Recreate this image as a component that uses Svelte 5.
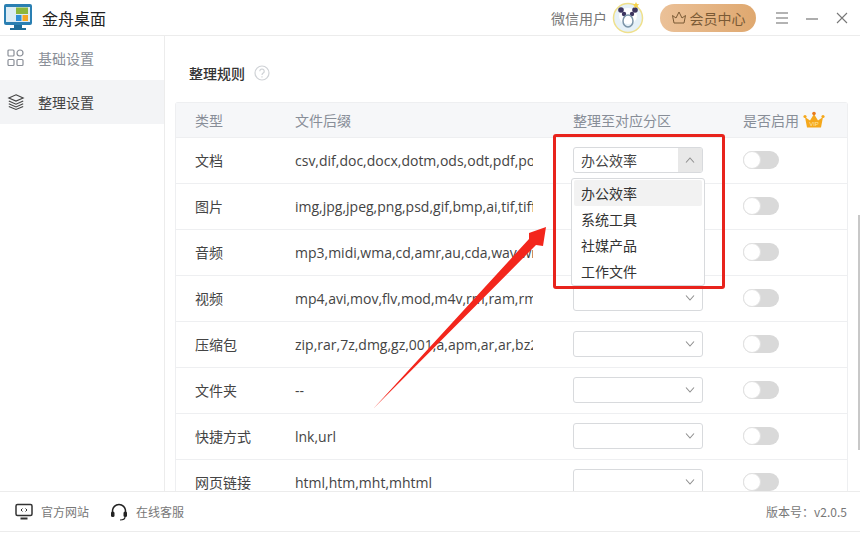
<script lang="ts">
	const rows = [
		{ type: '文档', ext: 'csv,dif,doc,docx,dotm,ods,odt,pdf,pot,potm,ppt', value: '办公效率', open: true },
		{ type: '图片', ext: 'img,jpg,jpeg,png,psd,gif,bmp,ai,tif,tiff,webp', value: '' },
		{ type: '音频', ext: 'mp3,midi,wma,cd,amr,au,cda,wav,wma,flac,ape', value: '' },
		{ type: '视频', ext: 'mp4,avi,mov,flv,mod,m4v,rm,ram,rmvb,mkv,wmv', value: '' },
		{ type: '压缩包', ext: 'zip,rar,7z,dmg,gz,001,a,apm,ar,ar,bz2,bzip2', value: '' },
		{ type: '文件夹', ext: '--', value: '' },
		{ type: '快捷方式', ext: 'lnk,url', value: '' },
		{ type: '网页链接', ext: 'html,htm,mht,mhtml', value: '' }
	];
	const options = ['办公效率', '系统工具', '社媒产品', '工作文件'];
</script>

<div class="app">
	<header class="topbar">
		<div class="brand">
			<svg width="29" height="28" viewBox="0 0 29 28">
				<rect x="0" y="0" width="28" height="21" rx="2" fill="#2a7fb2" />
				<rect x="2" y="3" width="24" height="15" fill="#dcecf5" />
				<rect x="12" y="3.500" width="12" height="6.500" fill="#8cb63c" />
				<rect x="12" y="11" width="5.500" height="6" fill="#2f8fd6" />
				<rect x="18.500" y="11" width="5.500" height="6" fill="#f5a623" />
				<rect x="10" y="21" width="8" height="3" fill="#1f6d99" />
				<rect x="6" y="24" width="16" height="2" fill="#1f6d99" />
			</svg>
			<span>金舟桌面</span>
		</div>
		<div class="top-right">
			<span class="user">微信用户</span>
			<svg class="avatar" width="32" height="32" viewBox="0 0 32 32">
				<circle cx="16" cy="16" r="14.500" fill="#e6f1f8" stroke="#efe08c" stroke-width="1.500" />
				<ellipse cx="16" cy="14" rx="9" ry="8" fill="#fff" />
				<circle cx="9" cy="8" r="2.800" fill="#3d3560" />
				<circle cx="23" cy="8" r="2.800" fill="#3d3560" />
				<circle cx="12" cy="12" r="2.200" fill="#3d3560" />
				<circle cx="20" cy="12" r="2.200" fill="#3d3560" />
				<ellipse cx="16" cy="19" rx="5" ry="6" fill="none" stroke="#7b94a8" stroke-width="1.500" />
				<path d="M24 0l1 2 2.200.3-1.600 1.500.4 2.200-2-1-2 1 .4-2.200L20.800 2.300 23 2z" fill="#f6d24a" />
			</svg>
			<button class="vip">
				<svg width="16" height="15" viewBox="0 0 16 15" fill="none" stroke="#7a5a35" stroke-width="1">
					<path d="M1.500 5.500l3.500 2.500L8 2l3 6 3.500-2.500L13 13H3z" />
				</svg>
				会员中心
			</button>
			<div class="win-btns">
				<svg width="14" height="14" viewBox="0 0 14 14" stroke="#9a9a9a" stroke-width="1.500"><path d="M1 2h12M1 7h12M1 12h12" /></svg>
				<svg width="14" height="14" viewBox="0 0 14 14" stroke="#777" stroke-width="1.200"><path d="M1 8h12" /></svg>
				<svg width="14" height="14" viewBox="0 0 14 14" stroke="#777" stroke-width="1.100"><path d="M2 2l10 10M12 2L2 12" /></svg>
			</div>
		</div>
	</header>

	<div class="body">
		<aside class="sidebar">
			<div class="nav-item">
				<svg width="18" height="18" viewBox="0 0 18 18" fill="none" stroke="#8a8f98" stroke-width="1.200">
					<rect x="1" y="1" width="6" height="6" rx="1" />
					<circle cx="13" cy="4" r="3" />
					<rect x="1" y="10.500" width="6" height="6" rx="1" />
					<rect x="10" y="10.500" width="6" height="6" rx="1" />
				</svg>
				<span>基础设置</span>
			</div>
			<div class="nav-item active">
				<svg width="18" height="18" viewBox="0 0 20 18" fill="none" stroke="#444" stroke-width="1.200">
					<path d="M10 1l8 3.500-8 3.500-8-3.500z" />
					<path d="M2 8l8 3.500L18 8" />
					<path d="M2 11l8 3.500 8-3.500" />
					<path d="M2 14l8 3.300 8-3.300" />
				</svg>
				<span>整理设置</span>
			</div>
		</aside>

		<main class="content">
			<div class="title">
				<span>整理规则</span>
				<svg width="16" height="16" viewBox="0 0 16 16" fill="none" stroke="#cfd2d6" stroke-width="1.200">
					<circle cx="8" cy="8" r="7" />
					<path d="M5.800 6.200a2.200 2.200 0 1 1 3.400 1.900C8.400 8.600 8 9 8 10M8 11.300v1.200" />
				</svg>
			</div>

			<div class="table">
				<div class="row head">
					<div class="c-type">类型</div>
					<div class="c-ext">文件后缀</div>
					<div class="c-sel">整理至对应分区</div>
					<div class="c-on">
						是否启用
						<svg width="22" height="18" viewBox="0 0 22 18">
							<path d="M2 6l5 3.500L11 3l4 6.500L20 6l-2 10.500H4z" fill="#f5a81c" />
							<circle cx="11" cy="2.500" r="1.800" fill="#e8791c" />
							<circle cx="2" cy="5.500" r="1.600" fill="#f5a81c" />
							<circle cx="20" cy="5.500" r="1.600" fill="#f5a81c" />
							<text x="11" y="15" text-anchor="middle" font-size="6" fill="#ffe6a8" font-family="Liberation Sans, sans-serif">VIP</text>
						</svg>
					</div>
				</div>
				{#each rows as row}
					<div class="row">
						<div class="c-type">{row.type}</div>
						<div class="c-ext"><span class="clip">{row.ext}</span></div>
						<div class="c-sel">
							<div class="select" class:open={row.open}>
								<span>{row.value}</span>
								<i class="arrow">
									<svg width="10" height="6" viewBox="0 0 10 6" fill="none" stroke="#8f8f8f" stroke-width="1.100">
										<path d={row.open ? 'M1 5.500l4-4.500 4 4.500' : 'M1 .5l4 4.500 4-4.500'} />
									</svg>
								</i>
							</div>
						</div>
						<div class="c-on"><span class="toggle"><b></b></span></div>
					</div>
				{/each}
			</div>
		</main>
		<div class="scroll-thumb"></div>

		<ul class="dropdown">
			{#each options as opt, i}
				<li class:hover={i === 0}>{opt}</li>
			{/each}
		</ul>
		<div class="red-box"></div>
		<svg class="red-arrow" width="180" height="190" viewBox="0 0 180 190">
			<path d="M0 189L156 19 156 13 173 7 170 26 163 25z" fill="#f3261c" />
		</svg>
	</div>

	<footer class="footer">
		<div class="links">
			<span class="link">
				<svg width="18" height="17" viewBox="0 0 18 17" fill="none" stroke="#333" stroke-width="1.500">
					<rect x="1" y="1.500" width="16" height="11" rx="1.500" />
					<path d="M5.500 15.500h7" stroke-width="2" />
					<path d="M7.500 5.500L6 7l1.500 1.500M10.500 5.500L12 7l-1.500 1.500" stroke-width="1" />
				</svg>
				官方网站
			</span>
			<span class="link">
				<svg width="18" height="18" viewBox="0 0 18 18" fill="none" stroke="#222">
					<path d="M2.500 10V8a6.500 6.500 0 0 1 13 0v2" stroke-width="1.500" />
					<rect x="1" y="8.500" width="3.500" height="5.500" rx="1.500" fill="#222" stroke="none" />
					<rect x="13.500" y="8.500" width="3.500" height="5.500" rx="1.500" fill="#222" stroke="none" />
					<path d="M15 14c0 2-2 3-5 3" stroke-width="1.200" />
				</svg>
				在线客服
			</span>
		</div>
		<span class="version">版本号：v2.0.5</span>
	</footer>
</div>

<style>
	:global(body) {
		background: #fff;
	}

	.app {
		width: 860px;
		height: 533px;
		display: flex;
		flex-direction: column;
		overflow: hidden;
		font-family: 'Noto Sans CJK SC', 'Open Sans', sans-serif;
		font-size: 14px;
		color: #555;
		background: #fff;
	}

	.topbar {
		height: 35px;
		flex: none;
		display: flex;
		align-items: center;
		justify-content: space-between;
		padding: 0 11px 0 4px;
		border-bottom: 1px solid #ececec;
	}

	.brand {
		display: flex;
		align-items: center;
		gap: 9px;
		font-size: 16px;
		color: #222;
	}

	.top-right {
		display: flex;
		align-items: center;
	}

	.user {
		color: #777;
		margin-right: 5px;
	}

	.avatar {
		margin-right: 16px;
		margin-top: 1px;
	}

	.vip {
		width: 96px;
		height: 28px;
		margin-right: 19px;
		padding: 0;
		border: 0;
		border-radius: 14px;
		background: linear-gradient(90deg, #ebc198, #dfa86f);
		color: #7a5a35;
		font: inherit;
		display: flex;
		align-items: center;
		justify-content: center;
		gap: 3px;
	}

	.win-btns {
		display: flex;
		gap: 16px;
	}

	.body {
		position: relative;
		flex: 1;
		min-height: 0;
		display: flex;
	}

	.sidebar {
		width: 164px;
		flex: none;
		border-right: 1px solid #ececec;
	}

	.nav-item {
		height: 44px;
		display: flex;
		align-items: center;
		gap: 13px;
		padding-left: 7px;
		color: #8a8f98;
	}

	.nav-item.active {
		background: #f3f4f6;
		color: #444;
	}

	.content {
		flex: 1;
		min-width: 0;
		padding: 0 14px 0 10px;
		overflow: hidden;
	}

	.title {
		height: 66px;
		box-sizing: border-box;
		padding: 8px 0 0 14px;
		display: flex;
		align-items: center;
		gap: 9px;
		color: #333;
		font-weight: 500;
	}

	.table {
		width: 671px;
		border: 1px solid #eeeff1;
		border-bottom: 0;
		border-radius: 3px 3px 0 0;
	}

	.row {
		height: 44px;
		padding-bottom: 1px;
		display: flex;
		align-items: center;
		border-bottom: 1px solid #eeeff1;
		color: #444;
	}

	.row.head {
		height: 33px;
		background: #f6f7f9;
		color: #888e98;
	}

	.c-type {
		width: 119px;
		padding-left: 19px;
		box-sizing: border-box;
		flex: none;
	}

	.c-ext {
		width: 278px;
		flex: none;
		font-family: 'Open Sans', 'Noto Sans CJK SC', sans-serif;
	}

	.head .c-ext {
		font-family: inherit;
	}

	.clip {
		display: block;
		width: 238px;
		overflow: hidden;
		white-space: nowrap;
	}

	.c-sel {
		width: 170px;
		flex: none;
	}

	.c-on {
		display: flex;
		align-items: center;
		gap: 4px;
	}

	.select {
		width: 130px;
		height: 26px;
		box-sizing: border-box;
		border: 1px solid #d8dadd;
		border-radius: 3px;
		display: flex;
		align-items: center;
		justify-content: space-between;
		padding-left: 7px;
		background: #fff;
		overflow: hidden;
	}

	.arrow {
		width: 24px;
		height: 100%;
		display: flex;
		align-items: center;
		justify-content: center;
	}

	.open .arrow {
		background: #e8e8e8;
	}

	.toggle {
		width: 36px;
		height: 18px;
		border-radius: 9px;
		background: #d9d9d9;
		display: block;
	}

	.toggle b {
		display: block;
		width: 18px;
		height: 18px;
		box-sizing: border-box;
		border-radius: 50%;
		background: #fff;
		border: 1px solid #e2e2e2;
	}

	.scroll-thumb {
		position: absolute;
		right: 0;
		top: 179px;
		width: 2px;
		height: 235px;
		background: #c8c8c8;
	}

	.dropdown {
		position: absolute;
		left: 571px;
		top: 142px;
		width: 134px;
		height: 108px;
		box-sizing: border-box;
		margin: 0;
		padding: 1px 2px;
		list-style: none;
		background: #fff;
		border: 1px solid #d8dadd;
		border-radius: 3px;
		color: #333;
	}

	.dropdown li {
		height: 26px;
		line-height: 26px;
		padding-left: 7px;
		border-radius: 2px;
	}

	.dropdown li.hover {
		background: #f2f2f2;
	}

	.red-box {
		position: absolute;
		left: 553px;
		top: 98px;
		width: 172px;
		height: 155px;
		box-sizing: border-box;
		border: 3px solid #e8231c;
		border-radius: 3px;
	}

	.red-arrow {
		position: absolute;
		left: 373px;
		top: 184px;
	}

	.footer {
		height: 41px;
		box-sizing: border-box;
		flex: none;
		margin-bottom: 1px;
		display: flex;
		align-items: center;
		justify-content: space-between;
		padding: 0 13px 0 15px;
		border-top: 1px solid #ececec;
		border-bottom: 1px solid #ececec;
		font-size: 12px;
		color: #777;
		background: #fff;
		position: relative;
	}

	.links {
		display: flex;
		gap: 21px;
	}

	.link {
		display: flex;
		align-items: center;
		gap: 8px;
	}
</style>
